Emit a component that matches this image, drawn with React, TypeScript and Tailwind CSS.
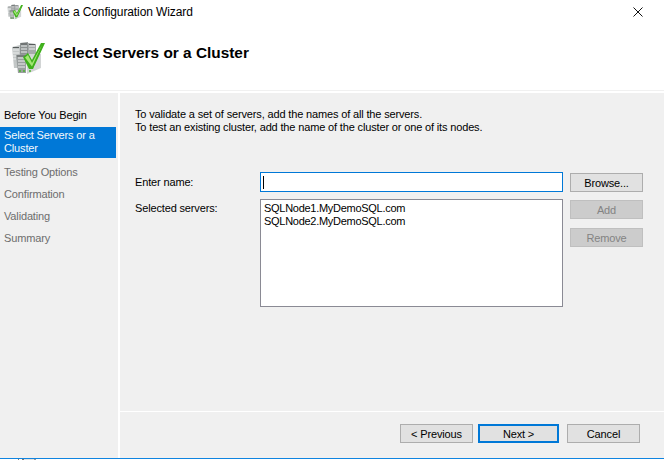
const STEPS = ['Testing Options', 'Confirmation', 'Validating', 'Summary']

function ServerIcon({ size }: { size: number }) {
  return (
    <svg width={size} height={size} viewBox="3 1 34 34" className="shrink-0">
      {/* back towers */}
      <path d="M4 7 L12 5 L12 28 L6 28 Z" fill="#c3c7c7" />
      <path d="M12 3 L20 2 L20 20 L12 20 Z" fill="#8d9292" />
      <path d="M20 3 L28 4 L28 20 L20 20 Z" fill="#a7abab" />
      {/* front towers */}
      <path d="M8 15 L18 14 L18 33 L10 33 Z" fill="#9a9f9f" />
      <path d="M18 14 L33 14 L33 28 L19 34 Z" fill="#d2d5d5" />
      <path d="M5 10 H11 M5 13 H11 M5 16 H8 M5 19 H8 M13 6 H19 M13 9 H19 M13 12 H19 M21 6 H27 M21 9 H27 M10 18 H17 M10 21 H17 M10 24 H17 M10 27 H17 M20 18 H24 M20 22 H26 M20 26 H27" stroke="#eceeee" strokeWidth="1.2" />
      <path d="M5 7.5 H11 M13 4 H19 M21 4.5 H27 M9 16 H17" stroke="#565b5b" strokeWidth="1" />
      <path d="M11 31 h2 M15 31 h2 M21 31 h2" stroke="#49b52e" strokeWidth="1.6" />
      {/* check */}
      <path d="M15 17 L20 13 L24 20 L33 3 L37 3 L25 29 L21 29 Z" fill="#3fb01c" />
      <path d="M17 17.5 L20 15 L24 23 L34 5 L24 26.5 Z" fill="#a3e774" />
    </svg>
  )
}

function Btn({ label, disabled, focus }: { label: string; disabled?: boolean; focus?: boolean }) {
  return (
    <button
      className={
        focus
          ? 'h-[19px] w-[81px] border-2 border-[#0078d7] bg-[#e1e1e1] text-[#000]'
          : disabled
            ? 'h-[19px] w-[73px] border border-[#bfbfbf] bg-[#cccccc] text-[#838383]'
            : 'h-[19px] w-[73px] border border-[#adadad] bg-[#e1e1e1] text-[#000]'
      }
    >
      {label}
    </button>
  )
}

export default function App() {
  return (
    <div className="flex h-[460px] w-[664px] flex-col overflow-hidden bg-white font-['Liberation_Sans',sans-serif] text-[11px] leading-[14px] tracking-[-0.15px] text-black">
      <div className="flex h-[24px] items-center justify-between pl-[7px] pr-[21px]">
        <div className="flex items-center gap-[5px]">
          <ServerIcon size={16} />
          <span className="text-[12px] tracking-[-0.1px]">Validate a Configuration Wizard</span>
        </div>
        <svg width="10" height="10" viewBox="0 0 10 10">
          <path d="M0.5 0.5 L9.5 9.5 M9.5 0.5 L0.5 9.5" stroke="#111" strokeWidth="1" />
        </svg>
      </div>
      <div className="flex h-[67px] items-start gap-[8px] border-b border-[#f0f0f0] pl-[11px] pt-[17px]">
        <ServerIcon size={34} />
        <h1 className="mt-[3px] text-[15.4px] font-bold leading-[18px] tracking-normal">Select Servers or a Cluster</h1>
      </div>
      <div className="flex h-[367px] border-t-2 border-white">
        <aside className="w-[118px] bg-[#f0f0f0] pt-[11px]">
          <div className="flex h-[23px] items-center pb-[2px] pl-[4px]">Before You Begin</div>
          <div className="flex h-[31px] w-[116px] items-center bg-[#0078d7] pb-[2px] pl-[4px] pr-[4px] leading-[13px] text-[#f4f8fc]">Select Servers or a Cluster</div>
          <div className="flex flex-col pt-[3px] text-[#6d6d6d]">
            {STEPS.map(s => (
              <div key={s} className="flex h-[22px] items-center pl-[4px]">{s}</div>
            ))}
          </div>
        </aside>
        <main className="ml-[2px] flex flex-1 flex-col bg-[#f0f0f0]">
          <div className="flex h-[319px] flex-col border-b border-white pl-[15px] pr-[21px] pt-[14px]">
            <p>To validate a set of servers, add the names of all the servers.</p>
            <p className="-mt-[1px]">To test an existing cluster, add the name of the cluster or one of its nodes.</p>
            <div className="mt-[38px] flex">
              <div className="w-[125px] pt-[3px]">
                <div>Enter name:</div>
                <div className="mt-[12px]">Selected servers:</div>
              </div>
              <div className="w-[303px]">
                <div className="flex h-[20px] items-center border border-[#0078d7] bg-white pl-[2px]">
                  <div className="h-[13px] w-[1px] bg-black" />
                </div>
                <div className="mt-[7px] h-[108px] border border-[#8a8a94] bg-white pl-[3px] pt-[2px] leading-[13px] tracking-[-0.28px]">
                  <div>SQLNode1.MyDemoSQL.com</div>
                  <div>SQLNode2.MyDemoSQL.com</div>
                </div>
              </div>
              <div className="ml-[7px] flex flex-col gap-[8px] pt-[1px]">
                <Btn label="Browse..." />
                <Btn label="Add" disabled />
                <div className="mt-[1px]"><Btn label="Remove" disabled /></div>
              </div>
            </div>
          </div>
          <div className="flex items-start justify-end gap-[5px] pr-[24px] pt-[12px]">
            <Btn label="< Previous" />
            <Btn label="Next >" focus />
            <div className="ml-[3px]"><Btn label="Cancel" /></div>
          </div>
        </main>
      </div>
      <div className="h-[1px] bg-[#0f84e0]" />
      <div className="flex h-[1px] pl-[18px]">
        <div className="w-[1px] bg-[#7a7a7a]" />
        <div className="ml-[3px] w-[2px] bg-[#7a7a7a]" />
        <div className="w-[10px] bg-[#e4e4e4]" />
        <div className="w-[2px] bg-[#9a9a9a]" />
      </div>
    </div>
  )
}
